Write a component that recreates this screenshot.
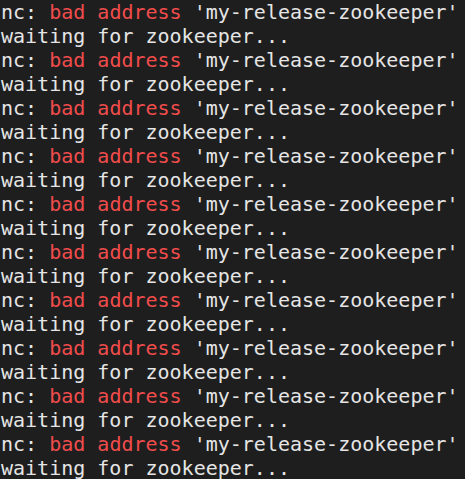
import React from "react";

export default function App() {
  const lines = Array.from({ length: 10 });
  return (
    <div className="w-[465px] h-[479px] overflow-hidden bg-[#1e1e1e] text-[#e5e5e5] font-['DejaVu_Sans_Mono',monospace] text-[20px] leading-[24px] whitespace-pre pl-[1px] pt-[0px]">
      {lines.map((_, i) => (
        <React.Fragment key={i}>
          <div>
            nc: <span className="text-[#f14c4c]">bad address</span> 'my-release-zookeeper'
          </div>
          <div>waiting for zookeeper...</div>
        </React.Fragment>
      ))}
    </div>
  );
}
